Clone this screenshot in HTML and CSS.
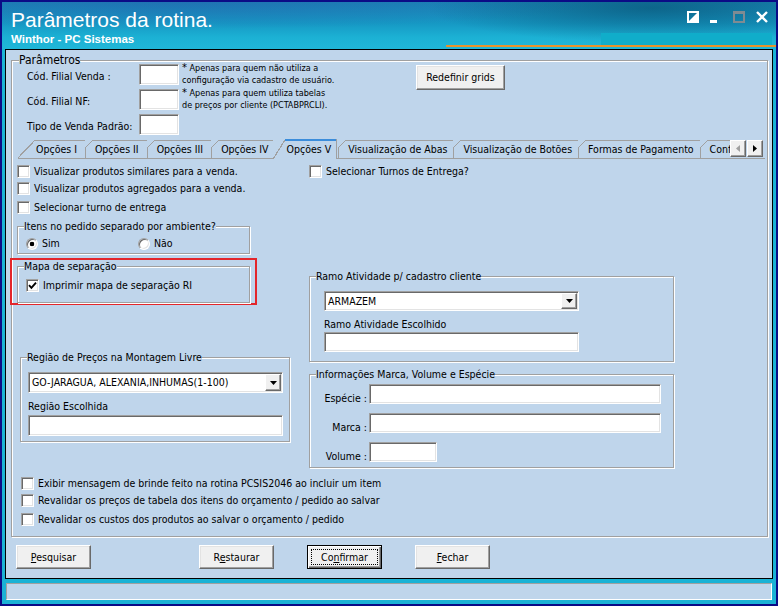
FILE: index.html
```html
<!DOCTYPE html>
<html lang="pt-BR">
<head>
<meta charset="utf-8">
<title>Parâmetros da rotina.</title>
<link rel="stylesheet" href="styles.css">
</head>
<body>
<div class="window">
  <header class="titlebar">
    <div class="titles">
      <div class="title">Parâmetros da rotina.</div>
      <div class="subtitle">Winthor - PC Sistemas</div>
    </div>
    <div class="controls">
      <svg viewBox="0 0 12 12"><rect x="1" y="1" width="10" height="10" fill="none" stroke="#fff" stroke-width="2"/><path d="M11 1V11H1Z" fill="#fff"/></svg>
      <svg viewBox="0 0 12 12"><rect x="0" y="9" width="7" height="3" fill="#fff"/></svg>
      <svg viewBox="0 0 12 12"><rect x="1" y="1" width="10" height="10" fill="none" stroke="#7f8b92" stroke-width="2"/><rect x="0" y="0" width="12" height="3" fill="#7f8b92"/></svg>
      <svg viewBox="0 0 12 12"><path d="M1 1L11 11M11 1L1 11" stroke="#fff" stroke-width="2.4"/></svg>
    </div>
  </header>

  <main class="panel">
    <fieldset class="grp params">
      <legend>Parâmetros</legend>
      <div class="top">
        <div class="fields">
          <div class="flabel">Cód. Filial Venda :</div>
          <div class="input"></div>
          <div class="note"><span class="ast">*</span> Apenas para quem não utiliza a<br>configuração via cadastro de usuário.</div>

          <div class="flabel">Cód. Filial NF:</div>
          <div class="input"></div>
          <div class="note"><span class="ast">*</span> Apenas para quem utiliza tabelas<br>de preços por cliente (PCTABPRCLI).</div>

          <div class="flabel">Tipo de Venda Padrão:</div>
          <div class="input"></div>
          <div></div>
        </div>
        <button class="btn redefinir">Redefinir grids</button>
      </div>

      <div class="tabs">
        <div class="tablist">
          <div class="tab opt first">Opções I</div>
          <div class="tab opt">Opções II</div>
          <div class="tab opt">Opções III</div>
          <div class="tab opt before-active">Opções IV</div>
          <div class="tab active">Opções V</div>
          <div class="tab after-active">Visualização de Abas</div>
          <div class="tab">Visualização de Botões</div>
          <div class="tab">Formas de Pagamento</div>
          <div class="tab cut">Conf</div>
        </div>
        <div class="scroller">
          <div class="arr"><svg width="4" height="7" viewBox="0 0 4 7"><path d="M4 0V7L0 3.5Z" fill="#a0a0a0"/></svg></div>
          <div class="arr"><svg width="4" height="7" viewBox="0 0 4 7"><path d="M0 0V7L4 3.5Z" fill="#000"/></svg></div>
        </div>
      </div>

      <div class="page">
        <div class="cols">
          <div class="col col-left">
            <div class="cb-row"><span class="cb"></span>Visualizar produtos similares para a venda.</div>
            <div class="cb-row"><span class="cb"></span>Visualizar produtos agregados para a venda.</div>
            <div class="cb-row gap2"><span class="cb"></span>Selecionar turno de entrega</div>

            <fieldset class="grp itens">
              <legend>Itens no pedido separado por ambiente?</legend>
              <div class="radios">
                <span class="ropt"><span class="radio on"></span>Sim</span>
                <span class="ropt"><span class="radio"></span>Não</span>
              </div>
            </fieldset>

            <div class="highlight">
              <fieldset class="grp mapa">
                <legend>Mapa de separação</legend>
                <div class="mapa-inner">
                  <div class="cb-row small"><span class="cb"><svg width="9" height="9" viewBox="0 0 9 9"><path d="M1 4.2L3.4 6.8L8 1.6" stroke="#000" stroke-width="1.9" fill="none"/></svg></span>Imprimir mapa de separação RI</div>
                </div>
              </fieldset>
            </div>

            <fieldset class="grp regiao">
              <legend>Região de Preços na Montagem Livre</legend>
              <div class="ginner regiao-inner">
                <div class="select"><span class="val">GO-JARAGUA, ALEXANIA,INHUMAS(1-100)</span><span class="dd"><svg width="7" height="4" viewBox="0 0 7 4"><path d="M0 0H7L3.5 4Z" fill="#000"/></svg></span></div>
                <div class="glabel">Região Escolhida</div>
                <div class="input wide"></div>
              </div>
            </fieldset>
          </div>

          <div class="col col-right">
            <div class="cb-row"><span class="cb"></span>Selecionar Turnos de Entrega?</div>

            <fieldset class="grp ramo">
              <legend>Ramo Atividade p/ cadastro cliente</legend>
              <div class="ginner ramo-inner">
                <div class="select short"><span class="val">ARMAZEM</span><span class="dd"><svg width="7" height="4" viewBox="0 0 7 4"><path d="M0 0H7L3.5 4Z" fill="#000"/></svg></span></div>
                <div class="glabel">Ramo Atividade Escolhido</div>
                <div class="input wide short"></div>
              </div>
            </fieldset>

            <fieldset class="grp info">
              <legend>Informações Marca, Volume e Espécie</legend>
              <div class="info-grid">
                <div class="ilabel">Espécie :</div><div class="input long"></div>
                <div class="ilabel">Marca :</div><div class="input long"></div>
                <div class="ilabel">Volume :</div><div class="input vol"></div>
              </div>
            </fieldset>
          </div>
        </div>

        <div class="bottom-checks">
          <div class="cb-row"><span class="cb"></span>Exibir mensagem de brinde feito na rotina PCSIS2046 ao incluir um item</div>
          <div class="cb-row"><span class="cb"></span>Revalidar os preços de tabela dos itens do orçamento / pedido ao salvar</div>
          <div class="cb-row gap2"><span class="cb"></span>Revalidar os custos dos produtos ao salvar o orçamento / pedido</div>
        </div>
      </div>
    </fieldset>

    <div class="buttons">
      <button class="btn"><u>P</u>esquisar</button>
      <button class="btn restaurar">R<u>e</u>staurar</button>
      <button class="btn default"><span class="focus">Co<u>n</u>firmar</span></button>
      <button class="btn"><u>F</u>echar</button>
    </div>
  </main>

  <div class="status"></div>
</div>
</body>
</html>
```

FILE: styles.css
```css
* { box-sizing: border-box; }

body {
  margin: 0;
  background: #fff;
  color: #000;
  font-family: "DejaVu Sans Condensed", "DejaVu Sans", sans-serif;
  font-stretch: condensed;
  font-size: 10.5px;
  line-height: 13px;
}

.window {
  width: 778px;
  height: 606px;
  border: 2px solid #0b0b86;
  background: #1bb2d5;
  padding: 0 3px;
  display: flex;
  flex-direction: column;
}

/* ---------- title bar ---------- */
.titlebar {
  flex: none;
  height: 47px;
  margin: 0 -3px;
  display: flex;
  justify-content: space-between;
  background:
    linear-gradient(#e8932c, #e8932c) 444px 43px / 331px 2px no-repeat,
    linear-gradient(#10adca, #10adca) 599px 31px / 171px 12px no-repeat,
    radial-gradient(ellipse 300px 46px at 650px 6px, rgba(3, 70, 100, .55), rgba(3, 70, 100, 0) 75%),
    radial-gradient(ellipse 520px 34px at 180px 0, rgba(40, 90, 175, .45), rgba(40, 90, 175, 0) 80%),
    linear-gradient(180deg, #1a86b6 0%, #1698c4 45%, #1cb1d4 75%, #20b7d8 100%);
}

.titles {
  padding: 6px 0 0 9px;
  color: #fff;
}

.title {
  font-family: "Liberation Sans", Arial, sans-serif;
  font-stretch: normal;
  font-size: 21px;
  line-height: 24px;
}

.subtitle {
  font-family: "Liberation Sans", Arial, sans-serif;
  font-stretch: normal;
  font-weight: bold;
  font-size: 11.5px;
  line-height: 13px;
  margin-top: 1px;
}

.controls {
  display: flex;
  align-items: flex-start;
  gap: 11px;
  padding: 9px 8px 0 0;
}

.controls svg {
  display: block;
  width: 12px;
  height: 12px;
}

/* ---------- main panel ---------- */
.panel {
  flex: none;
  height: 530px;
  border: 1px solid #000;
  background: #bfd5eb;
}

.status {
  flex: none;
  height: 17px;
  margin: 4px 1px 0;
  border: 1px solid;
  border-color: #a0a0a0 #fff #fff #a0a0a0;
  background: #bfd5eb;
}

/* ---------- group boxes ---------- */
.grp {
  margin: 0;
  padding: 0;
  min-inline-size: 0;
  border: 1px solid #a0a0a0;
  box-shadow: inset 1px 1px #fff, 1px 1px #fff;
}

.grp > legend {
  padding: 0;
  margin-left: 6px;
  line-height: 13px;
  background: #bfd5eb;
  white-space: nowrap;
}

.params {
  margin: 3px 0 0 5px;
  width: 757px;
}

.params > legend {
  margin-left: 7px;
  font-size: 12px;
  line-height: 14px;
}

/* ---------- sunken controls ---------- */
.input,
.cb,
.select {
  background: #fff;
  border: 1px solid;
  border-color: #a0a0a0 #fff #fff #a0a0a0;
  box-shadow: inset 1px 1px #696969, inset -1px -1px #e3e3e3;
}

/* ---------- top fields ---------- */
.top {
  display: flex;
  align-items: flex-start;
  margin-top: -3px;
  padding-left: 15px;
}

.fields {
  width: 389px;
  display: grid;
  grid-template-columns: 112px 40px auto;
  grid-auto-rows: 21px;
  row-gap: 4px;
}

.flabel {
  white-space: nowrap;
  padding-top: 6px;
}

.note {
  font-size: 9px;
  line-height: 12px;
  margin: -2px 0 0 3px;
  white-space: nowrap;
}

.ast {
  font-size: 11px;
}

/* ---------- buttons ---------- */
.btn {
  font: inherit;
  color: #000;
  width: 75px;
  height: 24px;
  padding: 0;
  background: #f0f0f0;
  border: 1px solid;
  border-color: #fff #696969 #696969 #fff;
  box-shadow: inset -1px -1px #a0a0a0, inset 1px 1px #e3e3e3;
}

.redefinir {
  width: 89px;
  height: 25px;
  margin-top: 1px;
}

.btn.default {
  border-color: #000;
  box-shadow: inset 1px 1px #fff, inset -1px -1px #696969, inset -2px -2px #a0a0a0;
  padding: 3px;
  display: flex;
}

.focus {
  flex: 1;
  display: flex;
  align-items: center;
  justify-content: center;
  border: 1px dotted #000;
}

.buttons {
  display: flex;
  margin-top: 8px;
  padding-left: 10px;
  gap: 33px;
}

.buttons .restaurar {
  margin-left: 75px;
}

/* ---------- tabs ---------- */
.tabs {
  display: flex;
  width: 747px;
  height: 19px;
  margin: 5px 0 0 6px;
  border-bottom: 1px solid #a0a0a0;
}

.tablist {
  flex: none;
  width: 712px;
  display: flex;
}

.tab {
  --ln: #a0a0a0;
  flex: none;
  padding: 0 6px 0 10px;
  line-height: 18px;
  white-space: nowrap;
  background:
    linear-gradient(to bottom right, transparent calc(50% - .6px), var(--ln) calc(50% - .6px), var(--ln) calc(50% + .6px), transparent calc(50% + .6px)) 0 0 / 8px 8px no-repeat,
    linear-gradient(var(--ln), var(--ln)) 0 8px / 1px 10px no-repeat,
    linear-gradient(var(--ln), var(--ln)) 8px 0 / 100% 1px no-repeat;
}

.tab.opt {
  padding-right: 8px;
}

.tab.first {
  padding-left: 18px;
  background:
    linear-gradient(to bottom right, transparent calc(50% - .6px), var(--ln) calc(50% - .6px), var(--ln) calc(50% + .6px), transparent calc(50% + .6px)) 0 0 / 17px 18px no-repeat,
    linear-gradient(var(--ln), var(--ln)) 17px 0 / 100% 1px no-repeat;
}

.tab.before-active {
  padding-right: 4px;
}

.tab.active {
  margin: -1px 0;
  padding: 0 5px 0 14px;
  line-height: 20px;
  border-right: 1px solid #a0a0a0;
  background:
    linear-gradient(#3b8ddb, #3b8ddb) 12px 0 / 100% 2px no-repeat,
    linear-gradient(to bottom right, transparent calc(50% - .6px), var(--ln) calc(50% - .6px), var(--ln) calc(50% + .6px), transparent calc(50% + .6px)) 0 1px / 12px 19px no-repeat,
    #bfd5eb;
}

.tab.after-active {
  margin-left: 1px;
}

.tab.cut {
  flex: 1 1 0;
  min-width: 0;
  overflow: hidden;
}

.scroller {
  display: flex;
  gap: 1px;
  height: 17px;
}

.arr {
  width: 16px;
  height: 17px;
  background: #f0f0f0;
  border: 1px solid;
  border-color: #fff #696969 #696969 #fff;
  box-shadow: inset -1px -1px #a0a0a0;
  display: flex;
  align-items: center;
  justify-content: center;
}

.arr svg { display: block; }

/* ---------- tab page ---------- */
.page {
  padding: 4px 0 8px 5px;
}

.cols {
  display: flex;
  gap: 19px;
}

.col {
  flex: none;
  display: flex;
  flex-direction: column;
  align-items: flex-start;
}

.col-left { width: 273px; }
.col-right { width: 365px; }

.cb-row {
  display: flex;
  align-items: center;
  gap: 4px;
  height: 17px;
  white-space: nowrap;
}

.cb-row.gap2 { margin-top: 2px; }
.cb-row.small { height: 15px; }

.cb {
  flex: none;
  width: 13px;
  height: 13px;
  display: flex;
  align-items: center;
  justify-content: center;
}

.cb svg { display: block; }

.itens {
  width: 233px;
  margin-top: 4px;
}

.radios {
  display: flex;
  align-items: center;
  height: 20px;
  padding: 3px 0 2px 8px;
}

.ropt {
  display: flex;
  align-items: center;
  gap: 4px;
}

.ropt:first-child { width: 112px; }

.radio {
  flex: none;
  width: 12px;
  height: 12px;
  border-radius: 50%;
  background: #fff;
  border: 1px solid;
  border-color: #a0a0a0 #fff #fff #a0a0a0;
  box-shadow: inset 1px 1px #696969, inset -1px -1px #e3e3e3;
}

.radio.on {
  background: radial-gradient(circle, #000 2px, #fff 2.6px);
}

.highlight {
  width: 247px;
  margin: 4px 0 0 -7px;
  padding: 0 0 0 5px;
  border: 2px solid #e3262b;
}

.mapa { width: 233px; }

.mapa-inner {
  padding: 5px 0 9px 8px;
}

.regiao {
  width: 270px;
  margin: 46px 0 0 3px;
}

.regiao-inner {
  padding: 8px 0 5px 7px;
}

.select {
  display: flex;
  align-items: stretch;
  width: 255px;
  height: 21px;
  padding: 1px;
}

.select.short { height: 20px; }

.select .val {
  flex: 1;
  padding-left: 2px;
  display: flex;
  align-items: center;
  white-space: nowrap;
}

.dd {
  width: 16px;
  background: #f0f0f0;
  border: 1px solid;
  border-color: #fff #696969 #696969 #fff;
  box-shadow: inset -1px -1px #a0a0a0;
  display: flex;
  align-items: center;
  justify-content: center;
}

.dd svg { display: block; }

.glabel {
  margin-top: 7px;
  white-space: nowrap;
}

.input.wide {
  width: 255px;
  height: 21px;
  margin-top: 2px;
}

.input.wide.short {
  height: 20px;
  margin-top: 1px;
}

.ramo {
  width: 365px;
  margin-top: 90px;
}

.ramo-inner {
  padding: 8px 0 9px 14px;
}

.info {
  width: 365px;
  margin-top: 6px;
}

.info-grid {
  display: grid;
  grid-template-columns: 57px auto;
  column-gap: 2px;
  row-gap: 9px;
  grid-auto-rows: 20px;
  align-items: end;
  padding: 3px 0 5px;
}

.ilabel {
  text-align: right;
  white-space: nowrap;
  line-height: 13px;
  margin-bottom: -1px;
}

.input.long { width: 292px; height: 20px; }
.input.vol { width: 68px; height: 20px; }

.bottom-checks {
  margin-top: 7px;
  padding-left: 4px;
}
```
